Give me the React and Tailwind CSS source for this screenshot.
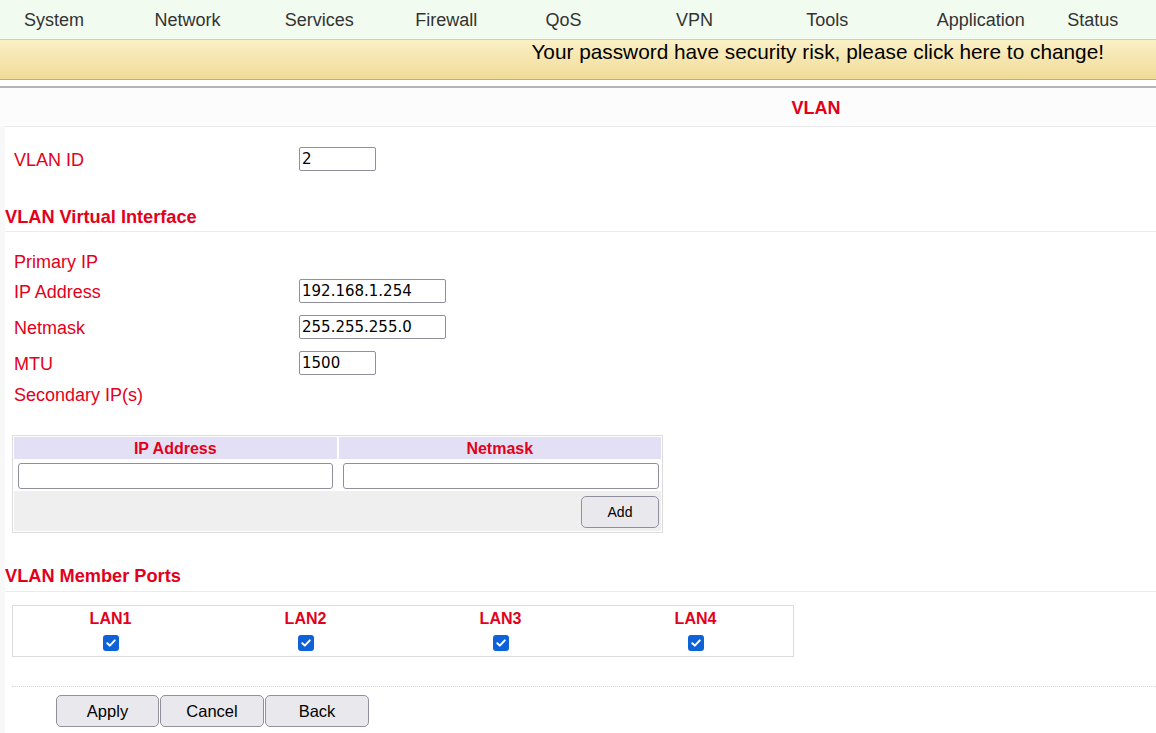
import React from "react";

const RED = "text-[#e3001b]";

function Field({ w, value }) {
  return (
    <input
      readOnly
      value={value}
      className={`h-[24px] ${w} border border-[#8f8f9d] rounded-[2px] bg-white px-[2px] text-[15px] text-black outline-none [font-family:'DejaVu_Sans',sans-serif]`}
    />
  );
}

function Row({ label, children, mt, h = "h-[24px]" }) {
  return (
    <div className={`grid grid-cols-[285px_1fr] items-center pl-[9px] ${h} ${mt}`}>
      <div className={`${RED} text-[18px] leading-[22px] pt-[2px]`}>{label}</div>
      <div className="flex items-center">{children}</div>
    </div>
  );
}

function Check() {
  return (
    <div className="w-[16px] h-[16px] rounded-[3px] bg-[#0d62d7] flex items-center justify-center">
      <svg width="12" height="12" viewBox="0 0 12 12">
        <path d="M2.3 6.2 L4.8 8.6 L9.8 3.4" fill="none" stroke="white" strokeWidth="2" strokeLinecap="round" strokeLinejoin="round" />
      </svg>
    </div>
  );
}

export default function App() {
  const nav = ["System", "Network", "Services", "Firewall", "QoS", "VPN", "Tools", "Application", "Status"];
  return (
    <div className="min-h-screen bg-[#f8f8f8] [font-family:'Liberation_Sans',Arial,sans-serif]">
      <div className="bg-white">
        <div className="h-[39px] bg-[#f2fbef] flex items-center pl-[24px] pt-[2px] text-[18px] text-[#333]">
          {nav.map((n) => (
            <div key={n} className="w-[130.4px] shrink-0 whitespace-nowrap">{n}</div>
          ))}
        </div>
        <div className="h-[41px] border-t border-b border-t-[#d6cda8] border-b-[#bfae78] bg-gradient-to-b from-[#fbf0c6] to-[#f0db97] flex justify-end pr-[52px]">
          <div className="text-[20.8px] leading-[23px] text-black whitespace-nowrap">
            Your password have security risk, please click here to change!
          </div>
        </div>
        <div className="h-[6px]" />
        <div className="h-[2px] bg-[#b4b4b4]" />
      </div>
      <div className="h-[38px] bg-[#fcfcfc] grid grid-cols-[476px_1fr] items-center">
        <div />
        <div className={`${RED} text-center font-bold text-[18px] leading-[20px] pt-[2px]`}>VLAN</div>
      </div>
      <div className="ml-[5px] bg-white border-t border-[#ebebeb] pb-[6px]">
        <Row label="VLAN ID" mt="mt-[20px]">
          <Field w="w-[77px]" value="2" />
        </Row>

        <div className={`${RED} font-bold text-[18.2px] leading-[20px] mt-[35px] pt-px pb-[4px] border-b border-[#ebebeb]`}>
          VLAN Virtual Interface
        </div>

        <Row label="Primary IP" mt="mt-[17px]" />
        <Row label="IP Address" mt="mt-[6px]">
          <Field w="w-[147px]" value="192.168.1.254" />
        </Row>
        <Row label="Netmask" mt="mt-[12px]">
          <Field w="w-[147px]" value="255.255.255.0" />
        </Row>
        <Row label="MTU" mt="mt-[12px]">
          <Field w="w-[77px]" value="1500" />
        </Row>
        <Row label="Secondary IP(s)" mt="mt-[7px]" />

        <div className="mt-[29px] ml-[7px] w-[651px] border border-[#dcdcdc] p-px">
          <div className="grid grid-cols-2 gap-x-[2px]">
            <div className={`h-[22px] bg-[#e3e0f5] ${RED} font-bold text-[16px] leading-[22px] pt-px text-center`}>IP Address</div>
            <div className={`h-[22px] bg-[#e3e0f5] ${RED} font-bold text-[16px] leading-[22px] pt-px text-center`}>Netmask</div>
            <div className="h-[31px] pt-[3px] pl-[4px] bg-white mt-px">
              <input readOnly className="h-[26px] w-[315px] border border-[#8f8f9d] rounded-[3px] bg-white outline-none" />
            </div>
            <div className="h-[31px] pt-[3px] pl-[4px] bg-white mt-px">
              <input readOnly className="h-[26px] w-[316px] border border-[#8f8f9d] rounded-[3px] bg-white outline-none" />
            </div>
          </div>
          <div className="h-[40px] bg-[#efefef] flex justify-end items-start pt-[5px] pr-[2px]">
            <button className="w-[78px] h-[32px] bg-[#e9e9ed] border border-[#8f8f9d] rounded-[5px] text-[14px] text-black">
              Add
            </button>
          </div>
        </div>

        <div className={`${RED} font-bold text-[18.2px] leading-[20px] mt-[32px] pt-px pb-[5px] border-b border-[#ebebeb]`}>
          VLAN Member Ports
        </div>

        <div className="mt-[13px] ml-[7px] w-[782px] border border-[#dcdcdc] grid grid-cols-4">
          {["LAN1", "LAN2", "LAN3", "LAN4"].map((l) => (
            <div key={l} className="flex flex-col items-center pt-[4px] pb-[5px]">
              <div className={`${RED} font-bold text-[16px] leading-[18px]`}>{l}</div>
              <div className="mt-[7px]">
                <Check />
              </div>
            </div>
          ))}
        </div>

        <div className="mt-[29px] ml-[7px] border-t border-dotted border-[#d8d8d8]" />

        <div className="mt-[8px] ml-[51px] flex gap-px">
          {[["Apply", "w-[103px]"], ["Cancel", "w-[104px]"], ["Back", "w-[104px]"]].map(([t, w]) => (
            <button key={t} className={`${w} h-[32px] bg-[#e9e9ed] border border-[#8f8f9d] rounded-[5px] text-[16.5px] text-black pt-px`}>
              {t}
            </button>
          ))}
        </div>
      </div>
    </div>
  );
}
